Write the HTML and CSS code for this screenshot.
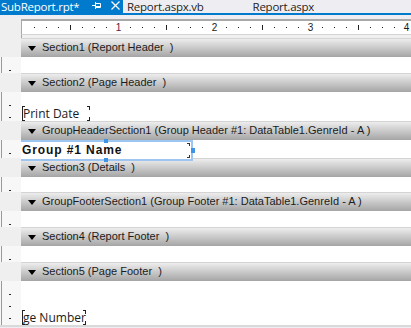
FILE: index.html
```html
<!DOCTYPE html>
<html>
<head>
<meta charset="utf-8">
<link rel="stylesheet" href="styles.css">
</head>
<body>
<div class="tabstrip">
  <div class="tab tab-active">
    <span class="tab-title">SubReport.rpt*</span>
    <svg class="pin" width="9" height="8" viewBox="0 0 9 8"><path d="M0 4.5H3M3.5 1V8M3.5 2.5H8.5V6.5H3.5M3.5 5.5H8.5" stroke="#fff" stroke-width="1" fill="none"/></svg>
    <svg class="close" width="9" height="9" viewBox="0 0 9 9"><path d="M0.5 0.5L8.5 8.5M8.5 0.5L0.5 8.5" stroke="#fff" stroke-width="1.2" fill="none"/></svg>
  </div>
  <div class="tab tab-second">Report.aspx.vb</div>
  <div class="tab tab-third">Report.aspx</div>
</div>
<div class="tabline"></div>
<div class="designer">
  <div class="row ruler-row">
    <div class="gutter"></div>
    <div class="hruler">
      <svg width="389" height="13" viewBox="0 0 389 13">
        <g fill="#222">
          <rect x="12" y="6" width="1" height="1"/><rect x="24" y="6" width="1" height="1"/><rect x="36" y="6" width="1" height="1"/><rect x="48" y="4" width="1" height="5"/><rect x="60" y="6" width="1" height="1"/><rect x="72" y="6" width="1" height="1"/><rect x="84" y="6" width="1" height="1"/>
          <rect x="108" y="6" width="1" height="1"/><rect x="120" y="6" width="1" height="1"/><rect x="132" y="6" width="1" height="1"/><rect x="144" y="4" width="1" height="5"/><rect x="156" y="6" width="1" height="1"/><rect x="168" y="6" width="1" height="1"/><rect x="180" y="6" width="1" height="1"/>
          <rect x="204" y="6" width="1" height="1"/><rect x="216" y="6" width="1" height="1"/><rect x="228" y="6" width="1" height="1"/><rect x="240" y="4" width="1" height="5"/><rect x="252" y="6" width="1" height="1"/><rect x="264" y="6" width="1" height="1"/><rect x="276" y="6" width="1" height="1"/>
          <rect x="300" y="6" width="1" height="1"/><rect x="312" y="6" width="1" height="1"/><rect x="324" y="6" width="1" height="1"/><rect x="336" y="4" width="1" height="5"/><rect x="348" y="6" width="1" height="1"/><rect x="360" y="6" width="1" height="1"/><rect x="372" y="6" width="1" height="1"/>
        </g>
        <g class="rnum" fill="#1a1a1a" text-anchor="middle">
          <text x="96.5" y="10" fill="#5a1848">1</text>
          <text x="192.5" y="10">2</text>
          <text x="288.5" y="10">3</text>
          <text x="384.5" y="10">4</text>
        </g>
      </svg>
    </div>
  </div>
  <div class="row gap-row"><div class="gutter"></div><div class="gapfill"></div></div>

  <div class="row bar-row"><div class="gutter"></div><div class="bar"><span class="tri"></span><span class="bar-text">Section1 (Report Header  )</span></div></div>
  <div class="row content-row h16"><div class="gutter vr"></div><div class="area"></div></div>

  <div class="row bar-row"><div class="gutter"></div><div class="bar"><span class="tri"></span><span class="bar-text">Section2 (Page Header  )</span></div></div>
  <div class="row content-row h29"><div class="gutter vr"></div><div class="area"><div class="field field-date">Print Date</div></div></div>

  <div class="row bar-row"><div class="gutter"></div><div class="bar"><span class="tri"></span><span class="bar-text">GroupHeaderSection1 (Group Header #1: DataTable1.GenreId - A )</span></div></div>
  <div class="row content-row h18"><div class="gutter vr"></div><div class="area"><div class="field-sel"><span class="sel-text">Group #1 Name</span><span class="handle h-top"></span><span class="handle h-right"></span><span class="handle h-bottom"></span></div></div></div>

  <div class="row bar-row"><div class="gutter"></div><div class="bar"><span class="tri"></span><span class="bar-text">Section3 (Details  )</span></div></div>
  <div class="row content-row h15"><div class="gutter vr"></div><div class="area"></div></div>

  <div class="row bar-row"><div class="gutter"></div><div class="bar"><span class="tri"></span><span class="bar-text">GroupFooterSection1 (Group Footer #1: DataTable1.GenreId - A )</span></div></div>
  <div class="row content-row h16"><div class="gutter vr"></div><div class="area"></div></div>

  <div class="row bar-row"><div class="gutter"></div><div class="bar"><span class="tri"></span><span class="bar-text">Section4 (Report Footer  )</span></div></div>
  <div class="row content-row h16"><div class="gutter vr"></div><div class="area"></div></div>

  <div class="row bar-row"><div class="gutter"></div><div class="bar"><span class="tri"></span><span class="bar-text">Section5 (Page Footer  )</span></div></div>
  <div class="row content-row h44"><div class="gutter vr"></div><div class="area"><div class="field field-page">ge Number</div></div></div>
</div>
<div class="bottomline"></div>
</body>
</html>
```

FILE: styles.css
```css
html, body {
  margin: 0;
  padding: 0;
}
body {
  width: 411px;
  height: 328px;
  overflow: hidden;
  background: #eeeef2;
  font-family: "Liberation Sans", Arial, sans-serif;
}
.tabstrip {
  display: flex;
  height: 13px;
  font-family: "Open Sans", "Noto Sans", sans-serif;
  font-size: 11.5px;
  line-height: 13px;
  color: #1e1e1e;
  white-space: nowrap;
}
.tab {
  height: 13px;
  overflow: hidden;
}
.tab-active {
  width: 123px;
  background: #007acc;
  color: #fff;
  display: flex;
  align-items: flex-start;
  padding-left: 1px;
  box-sizing: border-box;
}
.tab-title {
  letter-spacing: -0.25px;
}
.pin {
  margin-left: 13px;
  margin-top: 1px;
}
.close {
  margin-left: 10px;
  margin-top: 1px;
}
.tab-second {
  margin-left: 4px;
  letter-spacing: -0.25px;
}
.tab-third {
  margin-left: 49px;
  letter-spacing: -0.25px;
}
.tabline {
  height: 2px;
  background: #007acc;
  margin-bottom: 4px;
}
.designer {
  display: flex;
  flex-direction: column;
}
.row {
  display: flex;
}
.gutter {
  width: 21px;
  flex: none;
  background: #efefef;
}
.gutter.vr {
  box-sizing: border-box;
  border-left: 1px solid #f7f7f7;
  background:
    repeating-linear-gradient(to bottom, transparent 0 11px, #2a2a2a 11px 12px) 8px 2px / 2px calc(100% - 2px) no-repeat,
    linear-gradient(#9a9a9a, #9a9a9a) 0 0 / 1px 100% no-repeat,
    #f7f7f7;
}
.hruler {
  flex: 1;
  height: 13px;
  background: #fff;
  border-top: 2px solid #a9a9a9;
  border-bottom: 1px solid #d3d3d3;
  border-left: 1px solid #a9a9a9;
  overflow: hidden;
}
.hruler svg {
  display: block;
}
.rnum {
  font-family: "Liberation Sans", Arial, sans-serif;
  font-size: 10px;
}
.gap-row {
  height: 3px;
}
.gapfill {
  flex: 1;
  background: #f0f0f0;
  border-left: 1px solid #a9a9a9;
}
.bar-row {
  height: 19px;
}
.bar {
  flex: 1;
  display: flex;
  align-items: center;
  background: linear-gradient(to bottom, #d4d4d4 0 1px, #ededed 1px, #a5a5a5);
  font-size: 11px;
  color: #1c1c1c;
  white-space: pre;
  overflow: hidden;
}
.tri {
  width: 0;
  height: 0;
  border-left: 4px solid transparent;
  border-right: 4px solid transparent;
  border-top: 5px solid #000;
  margin-left: 7px;
  margin-right: 6px;
  margin-top: 1px;
}
.bar-text {
  line-height: 19px;
}
.content-row .area {
  flex: 1;
  background: #fff;
  position: relative;
}
.h15 { height: 15px; }
.h16 { height: 16px; }
.h18 { height: 18px; }
.h29 { height: 29px; }
.h44 { height: 44px; }

.field {
  box-sizing: border-box;
  height: 15px;
  font-family: "Open Sans", "Noto Sans", sans-serif;
  font-size: 12px;
  line-height: 15px;
  color: #1a1a1a;
  padding-left: 1px;
  background:
    linear-gradient(#222, #222) left top / 1px 100% no-repeat,
    linear-gradient(#222, #222) left top / 3px 1px no-repeat,
    linear-gradient(#222, #222) left bottom / 3px 1px no-repeat,
    linear-gradient(#222, #222) right top / 3px 1px no-repeat,
    linear-gradient(#222, #222) right top / 1px 4px no-repeat,
    linear-gradient(#222, #222) right bottom / 3px 1px no-repeat,
    linear-gradient(#222, #222) right bottom / 1px 4px no-repeat;
  white-space: nowrap;
}
.field-date {
  width: 68px;
  margin-left: 1px;
  margin-top: 14px;
}
.field-page {
  width: 64px;
  margin-left: 1px;
  margin-top: 29px;
}
.field-sel {
  position: relative;
  box-sizing: border-box;
  width: 172px;
  height: 21px;
  border: 2px solid #9cc6f1;
  border-left: none;
  font-family: "Liberation Sans", Arial, sans-serif;
  font-weight: bold;
  font-size: 12px;
  letter-spacing: 0.9px;
  line-height: 17px;
  color: #111;
  padding-left: 1px;
  white-space: nowrap;
  z-index: 2;
  background:
    linear-gradient(#333, #333) right 1px top 1px / 3px 1px no-repeat,
    linear-gradient(#333, #333) right 1px top 1px / 1px 3px no-repeat,
    linear-gradient(#333, #333) right 1px bottom 1px / 3px 1px no-repeat,
    linear-gradient(#333, #333) right 1px bottom 1px / 1px 3px no-repeat,
    #fff;
}
.handle {
  position: absolute;
  width: 4px;
  height: 4px;
  background: #3d94e6;
}
.h-top {
  left: 83px;
  top: -3px;
}
.h-bottom {
  left: 83px;
  bottom: -3px;
}
.h-right {
  right: -4px;
  top: 6px;
  height: 5px;
}
.bottomline {
  height: 2px;
  background: #d9d9d9;
}
```
